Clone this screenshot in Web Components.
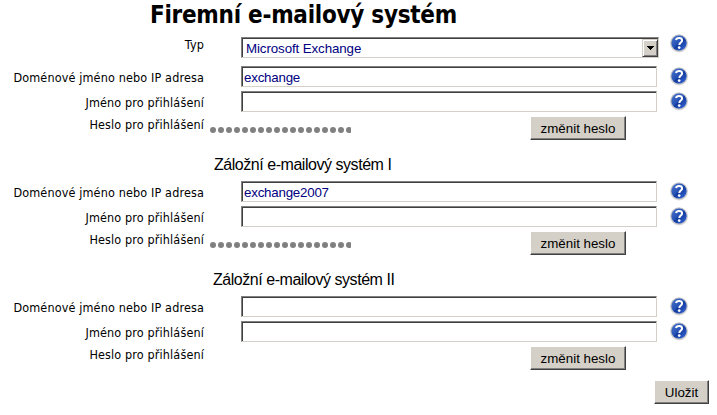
<!DOCTYPE html>
<html lang="cs">
<head>
<meta charset="utf-8">
<title>Firemní e-mailový systém</title>
<style>
    body {
        margin: 0;
        width: 717px;
        height: 415px;
        overflow: hidden;
        background: #fff;
        color: #000;
        font-family: "Liberation Sans", Arial, sans-serif;
    }
</style>
</head>
<body>
<mail-form heading="Firemní e-mailový systém">
    <form-row class="type" label="Typ" help>
        <select-box>Microsoft Exchange</select-box>
    </form-row>
    <mail-system>
        <form-row label="Doménové jméno nebo IP adresa" help><text-box>exchange</text-box></form-row>
        <form-row label="Jméno pro přihlášení" help><text-box></text-box></form-row>
        <password-row label="Heslo pro přihlášení" length="18"></password-row>
    </mail-system>
    <mail-system>
        <span slot="title" style="padding-left:214px">Záložní e-mailový systém I</span>
        <form-row label="Doménové jméno nebo IP adresa" help><text-box>exchange2007</text-box></form-row>
        <form-row label="Jméno pro přihlášení" help><text-box></text-box></form-row>
        <password-row label="Heslo pro přihlášení" length="18"></password-row>
    </mail-system>
    <mail-system>
        <span slot="title" style="padding-left:213px">Záložní e-mailový systém II</span>
        <form-row label="Doménové jméno nebo IP adresa" help><text-box></text-box></form-row>
        <form-row label="Jméno pro přihlášení" help><text-box></text-box></form-row>
        <password-row label="Heslo pro přihlášení" length="0"></password-row>
    </mail-system>
    <push-button slot="footer" style="width:55px">Uložit</push-button>
</mail-form>

<script>
// Label style shared by the rows
const labelStyle = `
    .label {
        width: 204px;
        text-align: right;
        white-space: nowrap;
        font: 12.5px/16px "DejaVu Sans Condensed", "DejaVu Sans", sans-serif;
        font-stretch: condensed;
        letter-spacing: 0.14px;
    }
`;

// Whole form: heading, rows and the save button
class MailForm extends HTMLElement {
    constructor() {
        super();
        this.attachShadow({ mode: 'open' });
        this.shadowRoot.innerHTML = `
            <style>
                :host { display: block; }
                h1 {
                    margin: 0;
                    height: 37px;
                    padding-left: 150px;
                    box-sizing: border-box;
                    white-space: nowrap;
                    font: bold 24px/31px "DejaVu Sans Condensed", "DejaVu Sans", sans-serif;
                    font-stretch: condensed;
                    letter-spacing: -0.27px;
                }
                footer {
                    display: flex;
                    justify-content: flex-end;
                    padding: 10px 8px 0 0;
                }
            </style>
            <h1></h1>
            <slot></slot>
            <footer><slot name="footer"></slot></footer>
        `;
        this.shadowRoot.querySelector('h1').textContent = this.getAttribute('heading');
    }
}

// One mail server, with an optional title above
class MailSystem extends HTMLElement {
    constructor() {
        super();
        this.attachShadow({ mode: 'open' });
        this.shadowRoot.innerHTML = `
            <style>
                :host { display: block; }
                ::slotted([slot="title"]) {
                    display: block;
                    height: 25px;
                    padding-top: 16px;
                    font-size: 16px;
                    line-height: 18px;
                    letter-spacing: -0.46px;
                    white-space: nowrap;
                }
            </style>
            <slot name="title"></slot>
            <slot></slot>
        `;
    }
}

// Label, field and help icon
class FormRow extends HTMLElement {
    constructor() {
        super();
        this.attachShadow({ mode: 'open' });
        this.shadowRoot.innerHTML = `
            <style>
                ${labelStyle}
                :host {
                    display: grid;
                    grid-template-columns: 241px 429px auto;
                    align-items: start;
                    height: 25px;
                }
                .label { padding-top: 4px; }
                help-icon { margin-top: 1px; }
                :host(.type) { height: 29px; }
                :host(.type) .label { padding-top: 0; }
                :host(.type) help-icon { margin-top: -3px; }
            </style>
            <div class="label"></div>
            <slot></slot>
            <help-icon></help-icon>
        `;
        this.shadowRoot.querySelector('.label').textContent = this.getAttribute('label');
    }
}

// Masked password and the button to change it
class PasswordRow extends HTMLElement {
    constructor() {
        super();
        this.attachShadow({ mode: 'open' });
        this.shadowRoot.innerHTML = `
            <style>
                ${labelStyle}
                :host {
                    display: grid;
                    grid-template-columns: 210px 320px 96px;
                    align-items: start;
                    height: 24px;
                }
                .label { padding-top: 1px; }
                .mask {
                    display: flex;
                    width: 141px;
                    padding-top: 11px;
                    overflow: hidden;
                }
                .mask i {
                    flex: none;
                    width: 6px;
                    height: 6px;
                    margin-right: 2px;
                    border-radius: 50%;
                    background: #808080;
                }
            </style>
            <div class="label"></div>
            <div class="mask"></div>
            <push-button>změnit heslo</push-button>
        `;
        this.shadowRoot.querySelector('.label').textContent = this.getAttribute('label');
        this.shadowRoot.querySelector('.mask').innerHTML = '<i></i>'.repeat(Number(this.getAttribute('length')));
    }
}

class TextBox extends HTMLElement {
    constructor() {
        super();
        this.attachShadow({ mode: 'open' });
        this.shadowRoot.innerHTML = `
            <style>
                :host {
                    display: block;
                    box-sizing: border-box;
                    width: 416px;
                    height: 21px;
                    border: 1px solid;
                    border-color: #808080 #d4d0c8 #d4d0c8 #808080;
                    box-shadow: inset 1px 1px #404040;
                    padding: 2px 0 0 2px;
                    color: #000080;
                    font-size: 13.33px;
                    line-height: 17px;
                    letter-spacing: -0.22px;
                }
            </style>
            <slot></slot>
        `;
    }
}

class SelectBox extends HTMLElement {
    constructor() {
        super();
        this.attachShadow({ mode: 'open' });
        this.shadowRoot.innerHTML = `
            <style>
                :host {
                    display: flex;
                    justify-content: space-between;
                    box-sizing: border-box;
                    width: 418px;
                    height: 21px;
                    border: 1px solid;
                    border-color: #808080 #d4d0c8 #d4d0c8 #808080;
                    box-shadow: inset 1px 1px #404040;
                    padding: 1px 0 0 4px;
                    color: #000080;
                    font-size: 13.33px;
                    line-height: 20px;
                    letter-spacing: -0.1px;
                }
                .arrow {
                    display: flex;
                    align-items: center;
                    justify-content: center;
                    box-sizing: border-box;
                    width: 16px;
                    height: 18px;
                    border: 1px solid;
                    border-color: #d4d0c8 #404040 #404040 #d4d0c8;
                    box-shadow: inset 1px 1px #fff, inset -1px -1px #808080;
                    background: #d4d0c8;
                }
            </style>
            <span><slot></slot></span>
            <div class="arrow">
                <svg width="7" height="4" shape-rendering="crispEdges"><path d="M0 0h7v1H6v1H5v1H4v1H3V3H2V2H1V1H0z"/></svg>
            </div>
        `;
    }
}

class PushButton extends HTMLElement {
    constructor() {
        super();
        this.attachShadow({ mode: 'open' });
        this.shadowRoot.innerHTML = `
            <style>
                :host {
                    display: block;
                    box-sizing: border-box;
                    height: 24px;
                    border: 1px solid;
                    border-color: #fff #404040 #404040 #fff;
                    box-shadow: inset -1px -1px #808080;
                    background: #d4d0c8;
                    color: #000;
                    font-size: 13.33px;
                    line-height: 23px;
                    text-align: center;
                    white-space: nowrap;
                }
            </style>
            <slot></slot>
        `;
    }
}

// Round blue question mark
class HelpIcon extends HTMLElement {
    constructor() {
        super();
        this.attachShadow({ mode: 'open' });
        this.shadowRoot.innerHTML = `
            <style>
                :host { display: block; width: 18px; height: 19px; }
                svg { display: block; }
            </style>
            <svg width="18" height="19" viewBox="0 0 18 19">
                <defs>
                    <linearGradient id="ball" x1="0" y1="0" x2="1" y2="1">
                        <stop offset="0" stop-color="#5078cc"/>
                        <stop offset=".48" stop-color="#2450b4"/>
                        <stop offset=".52" stop-color="#123a9c"/>
                        <stop offset="1" stop-color="#3a6ce0"/>
                    </linearGradient>
                </defs>
                <circle cx="9" cy="9.5" r="9" fill="#d8d8d8"/>
                <circle cx="9" cy="9" r="8.4" fill="#b8bcc6"/>
                <circle cx="9" cy="9" r="7.6" fill="url(#ball)"/>
                <path d="M6 6C6.4 4.5 7.6 4 9 4c1.9 0 3.1.9 3.1 2.4 0 2.1-2.8 2.2-2.8 4.6" fill="none" stroke="#fff" stroke-width="2"/>
                <circle cx="9.2" cy="13.6" r="1.35" fill="#fff"/>
            </svg>
        `;
    }
}

customElements.define('help-icon', HelpIcon);
customElements.define('push-button', PushButton);
customElements.define('select-box', SelectBox);
customElements.define('text-box', TextBox);
customElements.define('form-row', FormRow);
customElements.define('password-row', PasswordRow);
customElements.define('mail-system', MailSystem);
customElements.define('mail-form', MailForm);
</script>
</body>
</html>
